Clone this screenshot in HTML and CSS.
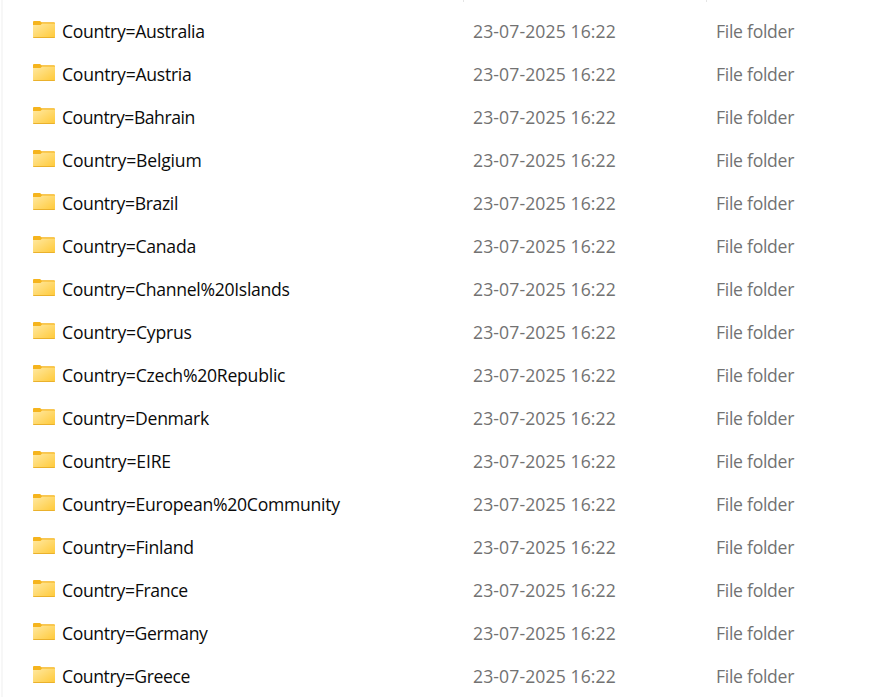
FILE: index.html
```html
<!DOCTYPE html>
<html lang="en">
<head>
<meta charset="utf-8">
<title>Folders</title>
<link rel="stylesheet" href="styles.css">
</head>
<body>
<svg class="defs" aria-hidden="true">
  <defs>
    <linearGradient id="front" x1="0" y1="0" x2="1" y2="1">
      <stop offset="0" stop-color="#ffe9a3"/>
      <stop offset="1" stop-color="#ffc937"/>
    </linearGradient>
    <symbol id="folder" viewBox="0 0 22 17">
      <path d="M0 1Q0 0 1 0H7L8.5 1.2H21Q22 1.2 22 2.2V8H0Z" fill="#f5b41d"/>
      <path d="M0 4H7.5L9 2.4H22V16.2Q22 17 21.2 17H.8Q0 17 0 16.2Z" fill="url(#front)"/>
      <path d="M.3 16.5H21.7" stroke="#eab12c" stroke-width="1"/>
    </symbol>
  </defs>
</svg>
<div class="header"><span></span><span></span><span></span></div>
<main class="list" id="list"></main>
<script src="list.js"></script>
</body>
</html>
```
FILE: styles.css
```css
* { box-sizing: border-box; }
body {
  margin: 0;
  height: 697px;
  overflow: hidden;
  background: linear-gradient(90deg, #fff 1px, #f7f7f7 1px 3px, #fff 3px);
  padding-left: 3px;
  font: 17.6px/43px "Open Sans", "Noto Sans", sans-serif;
  color: #0a0a0a;
}
.defs { display: block; width: 0; height: 0; }
.header {
  display: grid;
  grid-template-columns: 461px 243px 1fr;
  height: 10px;
}
.header span { height: 2px; border-right: 1px solid #e5e5e5; }
.header span:last-child { border: 0; }
.row {
  display: grid;
  grid-template-columns: 440px 243px 1fr;
  height: 43px;
  padding-left: 30px;
  white-space: nowrap;
}
.name { display: flex; }
.icon { width: 22px; height: 17px; margin: 11px 7px 0 0; }
.date, .type { color: #727272; }
.date { letter-spacing: 0.1px; }
.type { letter-spacing: -0.28px; }
```
FILE: list.js
```js
// Folder name and its letter fitting in pixels.
const countries = [["Australia", -.3], ["Austria", -.27], ["Bahrain", -.46],
  ["Belgium", -.19], ["Brazil", -.36], ["Canada", -.26], ["Channel%20Islands", -.31],
  ["Cyprus", -.2], ["Czech%20Republic", -.24], ["Denmark", -.31], ["EIRE", -.16],
  ["European%20Community", -.26], ["Finland", -.26], ["France", -.35],
  ["Germany", -.37], ["Greece", -.41]];

document.getElementById("list").innerHTML = countries.map(([country, fit]) => `
  <div class="row">
    <div class="name"><svg class="icon"><use href="#folder"/></svg><span style="letter-spacing:${fit}px">Country=${country}</span></div>
    <div class="date">23-07-2025 16:22</div>
    <div class="type">File folder</div>
  </div>`).join("");
```
